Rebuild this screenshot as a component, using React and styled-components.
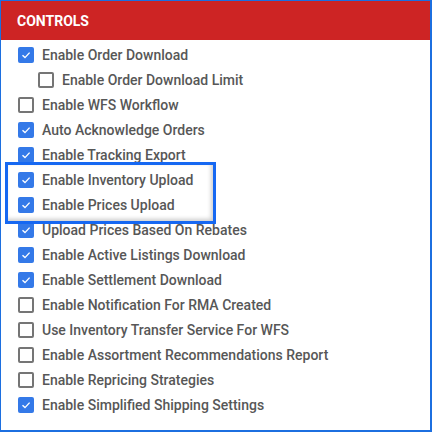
import React from "react";
import styled, { createGlobalStyle } from "styled-components";

const Global = createGlobalStyle`
  body {
    margin: 0;
    background: #fff;
    font-family: Roboto, "Liberation Sans", sans-serif;
  }
`;

const Frame = styled.div`
  width: 432px;
  height: 432px;
  box-sizing: border-box;
  border: 1px solid #1c6fe0;
  border-right-width: 2px;
  border-bottom-width: 2px;
  background: #fff;
  overflow: hidden;
`;

const Header = styled.div`
  height: 39px;
  background: #cd2424;
  color: #fff;
  font-size: 14px;
  font-weight: 700;
  display: flex;
  align-items: center;
  padding-left: 16px;
`;

const List = styled.div`
  padding-top: 2px;
  display: flex;
  flex-direction: column;
`;

/* callout box drawn over the neighbouring rows */
const Highlight = styled.div`
  position: relative;
  z-index: 1;
  margin: -5px 0 -7px 4px;
  width: 211px;
  box-sizing: border-box;
  border: 3px solid #1668f2;
  box-shadow: inset -2px -2px 4px rgba(0, 0, 0, 0.2);
  display: flex;
  flex-direction: column;
  padding: 2px 0 4px;
`;

const Row = styled.div`
  height: 25px;
  display: flex;
  align-items: center;
  padding-left: ${(p) => p.$indent}px;
  gap: 8px;
  color: #575757;
  font-size: 14px;
  font-weight: 500;
  white-space: nowrap;
`;

const Box = styled.span`
  width: 16px;
  height: 16px;
  box-sizing: border-box;
  border-radius: 2px;
  flex: none;
  display: flex;
  align-items: center;
  justify-content: center;
  background: ${(p) => (p.$on ? "#3479e8" : "#fff")};
  border: ${(p) => (p.$on ? "none" : "2px solid #757575")};
`;

const Check = () => (
  <svg width="10" height="10" viewBox="0 0 10 10">
    <path d="M1.5 5.2 L4 7.6 L8.6 2.6" fill="none" stroke="#fff" strokeWidth="1.4" />
  </svg>
);

const Item = ({ on, label, indent = 17 }) => (
  <Row $indent={indent}>
    <Box $on={on}>{on && <Check />}</Box>
    {label}
  </Row>
);

const before = [
  [true, "Enable Order Download", 17],
  [false, "Enable Order Download Limit", 37],
  [false, "Enable WFS Workflow", 17],
  [true, "Auto Acknowledge Orders", 17],
  [true, "Enable Tracking Export", 17],
];

const after = [
  [true, "Upload Prices Based On Rebates"],
  [true, "Enable Active Listings Download"],
  [true, "Enable Settlement Download"],
  [false, "Enable Notification For RMA Created"],
  [false, "Use Inventory Transfer Service For WFS"],
  [false, "Enable Assortment Recommendations Report"],
  [false, "Enable Repricing Strategies"],
  [true, "Enable Simplified Shipping Settings"],
];

export default function App() {
  return (
    <Frame>
      <Global />
      <Header>CONTROLS</Header>
      <List>
        {before.map(([on, label, indent]) => (
          <Item key={label} on={on} label={label} indent={indent} />
        ))}
        <Highlight>
          <Item on label="Enable Inventory Upload" indent={10} />
          <Item on label="Enable Prices Upload" indent={10} />
        </Highlight>
        {after.map(([on, label]) => (
          <Item key={label} on={on} label={label} />
        ))}
      </List>
    </Frame>
  );
}
